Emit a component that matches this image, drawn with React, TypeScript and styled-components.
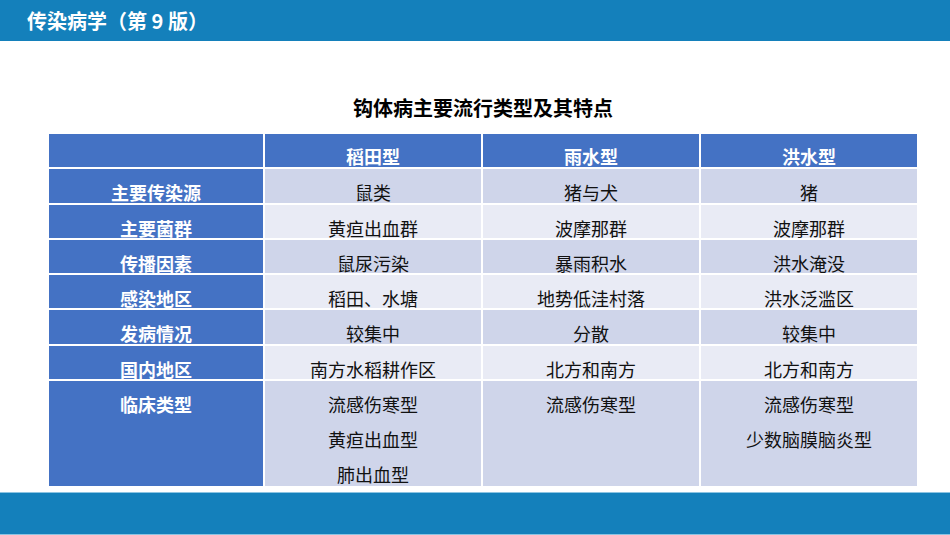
import React from "react";
import styled, { createGlobalStyle } from "styled-components";

const rows = [
  { label: "主要传染源", cells: [["鼠类"], ["猪与犬"], ["猪"]] },
  { label: "主要菌群", cells: [["黄疸出血群"], ["波摩那群"], ["波摩那群"]] },
  { label: "传播因素", cells: [["鼠尿污染"], ["暴雨积水"], ["洪水淹没"]] },
  { label: "感染地区", cells: [["稻田、水塘"], ["地势低洼村落"], ["洪水泛滥区"]] },
  { label: "发病情况", cells: [["较集中"], ["分散"], ["较集中"]] },
  { label: "国内地区", cells: [["南方水稻耕作区"], ["北方和南方"], ["北方和南方"]] },
  {
    label: "临床类型",
    cells: [
      ["流感伤寒型", "黄疸出血型", "肺出血型"],
      ["流感伤寒型"],
      ["流感伤寒型", "少数脑膜脑炎型"],
    ],
  },
];

const heads = ["稻田型", "雨水型", "洪水型"];

export default function App() {
  return (
    <>
      <Global />
      <Page>
        <TopBar>传染病学（第 9 版）</TopBar>
        <Main>
          <Title>钩体病主要流行类型及其特点</Title>
          <Table>
            <HeadCell />
            {heads.map((h) => (
              <HeadCell key={h}>{h}</HeadCell>
            ))}
            {rows.map((r, i) => (
              <React.Fragment key={r.label}>
                <LabelCell>{r.label}</LabelCell>
                {r.cells.map((lines, j) => (
                  <Cell key={j} $odd={i % 2 === 0}>
                    {lines.map((l) => (
                      <Line key={l}>{l}</Line>
                    ))}
                  </Cell>
                ))}
              </React.Fragment>
            ))}
          </Table>
        </Main>
        <BottomBar />
      </Page>
    </>
  );
}

const Global = createGlobalStyle`
  html, body { margin: 0; padding: 0; background: #fff; }
  body {
    font-family: "Noto Sans CJK SC", "Noto Sans", sans-serif;
  }
`;

const Page = styled.div`
  width: 950px;
  height: 535px;
  display: flex;
  flex-direction: column;
  overflow: hidden;
`;

const TopBar = styled.div`
  height: 41px;
  background: #1480bb;
  color: #fff;
  font-weight: 700;
  font-size: 20px;
  line-height: 41px;
  padding-left: 27px;
`;

const Main = styled.div`
  flex: 1;
  padding: 55px 0 0 49px;
`;

const Title = styled.div`
  width: 868px;
  text-align: center;
  font-size: 20px;
  font-weight: 700;
  line-height: 24px;
  color: #000;
`;

const Table = styled.div`
  margin-top: 14px;
  width: 868px;
  display: grid;
  grid-template-columns: 214px 216px 216px 216px;
  grid-template-rows: 33px 34px 33px 33px 33px 34px 33px 105px;
  gap: 2px;
  background: #fff;
  font-size: 18px;
`;

const BaseCell = styled.div`
  text-align: center;
  line-height: 20px;
  padding-top: 13px;
  box-sizing: border-box;
`;

const HeadCell = styled(BaseCell)`
  background: #4472c4;
  color: #fff;
  font-weight: 700;
  padding-top: 12px;
`;

const LabelCell = styled(BaseCell)`
  background: #4472c4;
  color: #fff;
  font-weight: 700;
`;

const Cell = styled(BaseCell)<{ $odd: boolean }>`
  background: ${(p) => (p.$odd ? "#cfd5ea" : "#e9ebf5")};
  color: #111;
`;

const Line = styled.div`
  & + & {
    margin-top: 15px;
  }
`;

const BottomBar = styled.div`
  height: 41px;
  background: #1480bb;
  border-top: 1px solid #8cc4e2;
  border-bottom: 1px solid #8cc4e2;
`;
